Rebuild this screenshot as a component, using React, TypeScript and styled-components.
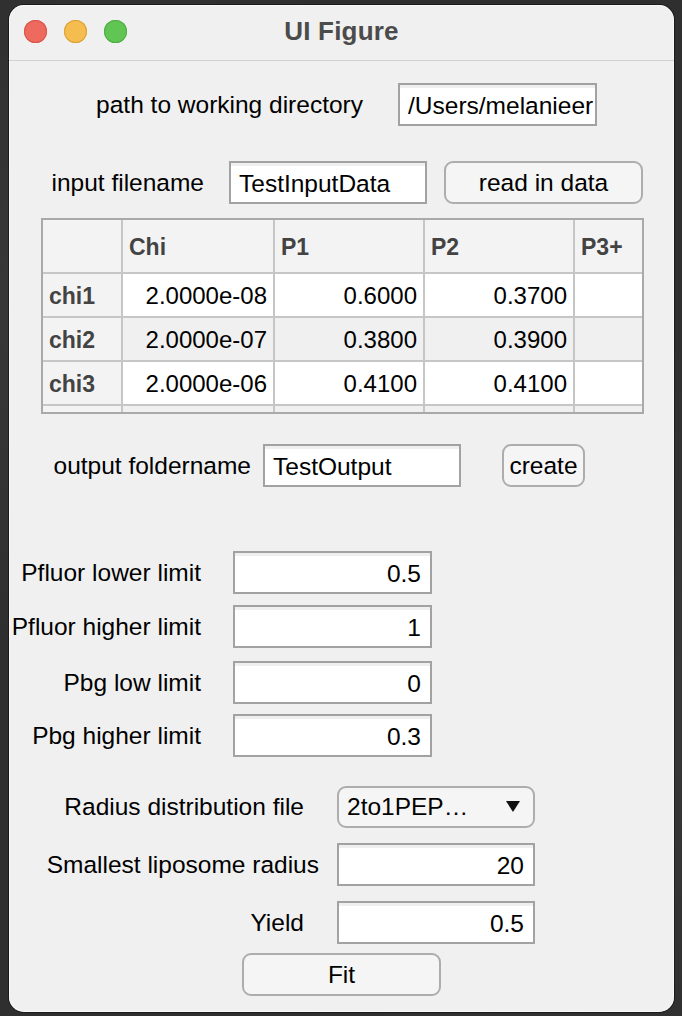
import React from "react";
import styled, { createGlobalStyle } from "styled-components";

const Global = createGlobalStyle`
  html, body {
    margin: 0;
    padding: 0;
    background: #343434;
  }
  body {
    font-family: "Liberation Sans", Arial, Helvetica, sans-serif;
    -webkit-font-smoothing: antialiased;
  }
`;

const Desktop = styled.div`
  width: 682px;
  height: 1016px;
  padding: 5px 0 0 9px;
  box-sizing: border-box;
  background:
    radial-gradient(circle at 20% 30%, rgba(255,255,255,0.06), transparent 40%),
    radial-gradient(circle at 80% 70%, rgba(255,255,255,0.05), transparent 45%),
    #2f2f2f;
`;

const Window = styled.div`
  width: 665px;
  height: 1007px;
  border-radius: 15px;
  background: #f0f0f0;
  box-shadow: inset 0 0 0 1px rgba(255, 255, 255, 0.6), 0 0 0 1px rgba(0, 0, 0, 0.45);
  display: flex;
  flex-direction: column;
  overflow: hidden;
`;

const TitleBar = styled.div`
  height: 55px;
  flex: none;
  border-bottom: 1px solid #d2d2d2;
  display: grid;
  grid-template-columns: 1fr auto 1fr;
  align-items: center;
`;

const Lights = styled.div`
  display: flex;
  gap: 17px;
  padding-left: 15px;
  margin-top: -2px;
`;

const Light = styled.span<{ $c: string; $b: string }>`
  width: 23px;
  height: 23px;
  border-radius: 50%;
  background: ${(p) => p.$c};
  box-shadow: inset 0 0 0 1px ${(p) => p.$b};
`;

const Title = styled.div`
  font-size: 26px;
  font-weight: 700;
  color: #4b4b4b;
  letter-spacing: 0.2px;
  margin-top: -2px;
`;

const Content = styled.div`
  display: flex;
  flex-direction: column;
`;

const Row = styled.div<{ $top: number }>`
  display: flex;
  align-items: center;
  height: 43px;
  margin-top: ${(p) => p.$top}px;
`;

const Label = styled.span<{ $w: number }>`
  width: ${(p) => p.$w}px;
  flex: none;
  text-align: right;
  white-space: nowrap;
  font-size: 24.5px;
  color: #000;
`;

const Field = styled.div<{ $gap: number; $w: number; $right?: boolean }>`
  margin-left: ${(p) => p.$gap}px;
  width: ${(p) => p.$w}px;
  height: 100%;
  flex: none;
  box-sizing: border-box;
  border: 2px solid #a2a2a2;
  background: #fff;
  box-shadow: inset 0 3px 0 #efefef;
  display: flex;
  align-items: center;
  justify-content: ${(p) => (p.$right ? "flex-end" : "flex-start")};
  padding: ${(p) => (p.$right ? "2px 9px 0 0" : "2px 0 0 8px")};
  font-size: 24.5px;
  color: #000;
  white-space: nowrap;
  overflow: hidden;
`;

const Button = styled.div<{ $gap: number; $w: number }>`
  margin-left: ${(p) => p.$gap}px;
  width: ${(p) => p.$w}px;
  height: 100%;
  flex: none;
  box-sizing: border-box;
  border: 2px solid #adadad;
  border-radius: 9px;
  background: #f5f5f5;
  display: flex;
  align-items: center;
  justify-content: center;
  font-size: 24.5px;
  color: #000;
  white-space: nowrap;
`;

const Dropdown = styled.div<{ $gap: number; $w: number }>`
  margin-left: ${(p) => p.$gap}px;
  width: ${(p) => p.$w}px;
  height: 42px;
  flex: none;
  box-sizing: border-box;
  border: 2px solid #adadad;
  border-radius: 9px;
  background: #f5f5f5;
  display: flex;
  align-items: center;
  justify-content: space-between;
  padding: 0 13px 0 8px;
  font-size: 24.5px;
  color: #000;
  white-space: nowrap;
`;

const Arrow = styled.svg`
  width: 14px;
  height: 11px;
  flex: none;
`;

const TableFrame = styled.div`
  margin: 14px 0 0 32px;
  width: 603px;
  height: 196px;
  box-sizing: border-box;
  border: 2px solid #a9a9a9;
  background: #c6c6c6;
  display: grid;
  grid-template-columns: 78px 150px 148px 148px 67px;
  grid-template-rows: 52px 42px 42px 42px 6px;
  gap: 2px;
  overflow: hidden;
`;

const HeadCell = styled.div`
  background: #f3f3f3;
  display: flex;
  align-items: center;
  padding: 2px 0 0 6px;
  font-size: 23px;
  font-weight: 700;
  color: #434343;
`;

const RowHead = styled(HeadCell)`
  padding-left: 6px;
`;

const Cell = styled.div<{ $alt: boolean }>`
  background: ${(p) => (p.$alt ? "#f0f0f0" : "#ffffff")};
  display: flex;
  align-items: center;
  justify-content: flex-end;
  padding: 2px 6px 0 0;
  font-size: 24px;
  color: #000;
  white-space: nowrap;
`;

const FitRow = styled.div`
  margin: 9px 0 0 233px;
  height: 43px;
  display: flex;
`;

const header = ["", "Chi", "P1", "P2", "P3+"];
const rows = [
  ["chi1", "2.0000e-08", "0.6000", "0.3700", ""],
  ["chi2", "2.0000e-07", "0.3800", "0.3900", ""],
  ["chi3", "2.0000e-06", "0.4100", "0.4100", ""],
  ["", "", "", "", ""],
];

const limits: [string, string, number][] = [
  ["Pfluor lower limit", "0.5", 64],
  ["Pfluor higher limit", "1", 11],
  ["Pbg low limit", "0", 13],
  ["Pbg higher limit", "0.3", 10],
];

export default function App() {
  return (
    <>
      <Global />
      <Desktop>
        <Window>
          <TitleBar>
            <Lights>
              <Light $c="#ee6a5f" $b="#d9564b" />
              <Light $c="#f5bd4f" $b="#dca23a" />
              <Light $c="#61c554" $b="#4fae43" />
            </Lights>
            <Title>UI Figure</Title>
            <span />
          </TitleBar>
          <Content>
            <Row $top={22}>
              <Label $w={354}>path to working directory</Label>
              <Field $gap={35} $w={199}>/Users/melanieer</Field>
            </Row>
            <Row $top={35}>
              <Label $w={195}>input filename</Label>
              <Field $gap={25} $w={198}>TestInputData</Field>
              <Button $gap={17} $w={199}>read in data</Button>
            </Row>
            <TableFrame>
              {header.map((h, i) => (
                <HeadCell key={`h${i}`}>{h}</HeadCell>
              ))}
              {rows.map((r, ri) =>
                r.map((c, ci) =>
                  ci === 0 ? (
                    <RowHead key={`${ri}-${ci}`}>{c}</RowHead>
                  ) : (
                    <Cell key={`${ri}-${ci}`} $alt={ri % 2 === 1}>
                      {c}
                    </Cell>
                  )
                )
              )}
            </TableFrame>
            <Row $top={30}>
              <Label $w={242}>output foldername</Label>
              <Field $gap={12} $w={198}>TestOutput</Field>
              <Button $gap={41} $w={83}>create</Button>
            </Row>
            {limits.map(([l, v, t]) => (
              <Row key={l} $top={t}>
                <Label $w={192}>{l}</Label>
                <Field $gap={32} $w={199} $right>
                  {v}
                </Field>
              </Row>
            ))}
            <Row $top={28}>
              <Label $w={295}>Radius distribution file</Label>
              <Dropdown $gap={33} $w={198}>
                <span>2to1PEP…</span>
                <Arrow viewBox="0 0 14 11">
                  <path d="M0 0 H14 L7 11 Z" fill="#111" />
                </Arrow>
              </Dropdown>
            </Row>
            <Row $top={15}>
              <Label $w={310}>Smallest liposome radius</Label>
              <Field $gap={18} $w={198} $right>
                20
              </Field>
            </Row>
            <Row $top={15}>
              <Label $w={295}>Yield</Label>
              <Field $gap={33} $w={198} $right>
                0.5
              </Field>
            </Row>
            <FitRow>
              <Button $gap={0} $w={199}>Fit</Button>
            </FitRow>
          </Content>
        </Window>
      </Desktop>
    </>
  );
}
